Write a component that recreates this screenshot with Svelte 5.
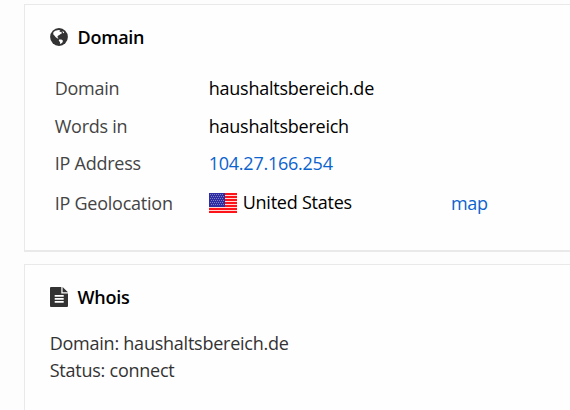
<script lang="ts">
  const domain = 'haushaltsbereich.de'

  const details = [
    { label: 'Domain', value: domain },
    { label: 'Words in', value: 'haushaltsbereich' },
    { label: 'IP Address', value: '104.27.166.254', link: true },
  ]

  // rows of the flag that carry a red stripe
  const stripes = [0, 3, 6, 9, 12, 15, 18]
</script>

<main>
  <section class="card">
    <h2>
      <svg class="icon" viewBox="0 0 18 18">
        <circle cx="9" cy="9" r="8.9" fill="#333" />
        <path d="M3.4 4.2 5.2 2.8 8.7 2 10.3 2.6 9.4 3.9 11.2 3.8 12 5.2 10.6 6 9.4 7 8 7.8 7.3 9 8.6 10.2 7.6 10.6 5.8 9.3 4.4 7.4 3.2 6.2zM12.4 2.8 14.2 4.2 13.8 5.2 12.9 4.8zM9 11.4 11.4 11.4 13 12.8 12.4 14.5 10.9 15.8 9.9 15.7 10.1 14.2 8.8 12.8z" fill="#fff" />
      </svg>
      <span>Domain</span>
    </h2>

    <dl class="details">
      {#each details as row}
        <dt>{row.label}</dt>
        <dd class:link={row.link}>{row.value}</dd>
      {/each}
      <dt class="geo-label">IP Geolocation</dt>
      <dd class="geo">
        <svg class="flag" viewBox="0 0 28 20">
          <rect width="28" height="20" fill="#ffd8d8" />
          {#each stripes as y}
            <rect {y} width="28" height="2" fill="#fc1418" />
          {/each}
          <rect width="16" height="14" fill="#2e2ea2" />
          {#each [1, 3, 5, 7, 9, 11] as y, i}
            <path d="M{1 + (i % 2)} {y + 0.5}H15" stroke="#7d7dca" stroke-width="1" stroke-dasharray="1 1" />
          {/each}
        </svg>
        <span>United States</span>
        <span class="link map">map</span>
      </dd>
    </dl>
  </section>

  <section class="card whois">
    <h2>
      <svg class="icon file" viewBox="0 0 18 20">
        <path d="M1 0h10.3v6.5H18V19a1 1 0 0 1-1 1H1a1 1 0 0 1-1-1V1a1 1 0 0 1 1-1zM12.6 0 18 5.3h-5.4z" fill="#333" />
        <path d="M4.7 8.9h9M4.7 11.9h9M4.7 14.9h9" stroke="#fff" stroke-width="1.7" />
      </svg>
      <span>Whois</span>
    </h2>
    <p>Domain: {domain}<br />Status: connect</p>
  </section>
</main>

<style>
  :global(body) {
    margin: 0;
    background: #fdfdfd;
  }

  main {
    box-sizing: border-box;
    height: 410px;
    padding: 4px 0 0 24px;
    overflow: hidden;
    font-family: "Open Sans", "Noto Sans", sans-serif;
    font-size: 18px;
    letter-spacing: -0.24px;
    line-height: 27px;
    color: #000;
  }

  .card {
    box-sizing: border-box;
    width: 600px;
    height: 248px;
    padding: 19px 25px 0;
    border: 1px solid #e9e9e9;
    border-bottom-width: 2px;
    background: #fefefe;
  }

  .whois {
    margin-top: 12px;
  }

  h2 {
    display: flex;
    align-items: center;
    gap: 10px;
    margin: 0;
    font-size: 18px;
    font-weight: 600;
    line-height: 27px;
  }

  .icon {
    width: 18px;
    height: 18px;
    margin: 0 0 1px -0.5px;
  }

  .file {
    height: 20px;
  }

  .details {
    display: grid;
    grid-template-columns: 154px 1fr;
    grid-template-rows: 38px 37px 39px 27px;
    margin: 24px 0 0 4.7px;
  }

  dt {
    color: #444;
  }

  .geo-label {
    padding-top: 1px;
  }

  dd {
    margin: 0;
  }

  .link {
    color: #0b63ce;
  }

  .geo {
    display: flex;
    align-items: center;
    height: 27px;
  }

  .flag {
    width: 28px;
    height: 20px;
    margin-right: 6px;
  }

  .map {
    margin-left: 99px;
    padding-top: 2px;
  }

  p {
    margin: 19px 0 0 -0.3px;
    color: #333;
  }
</style>
